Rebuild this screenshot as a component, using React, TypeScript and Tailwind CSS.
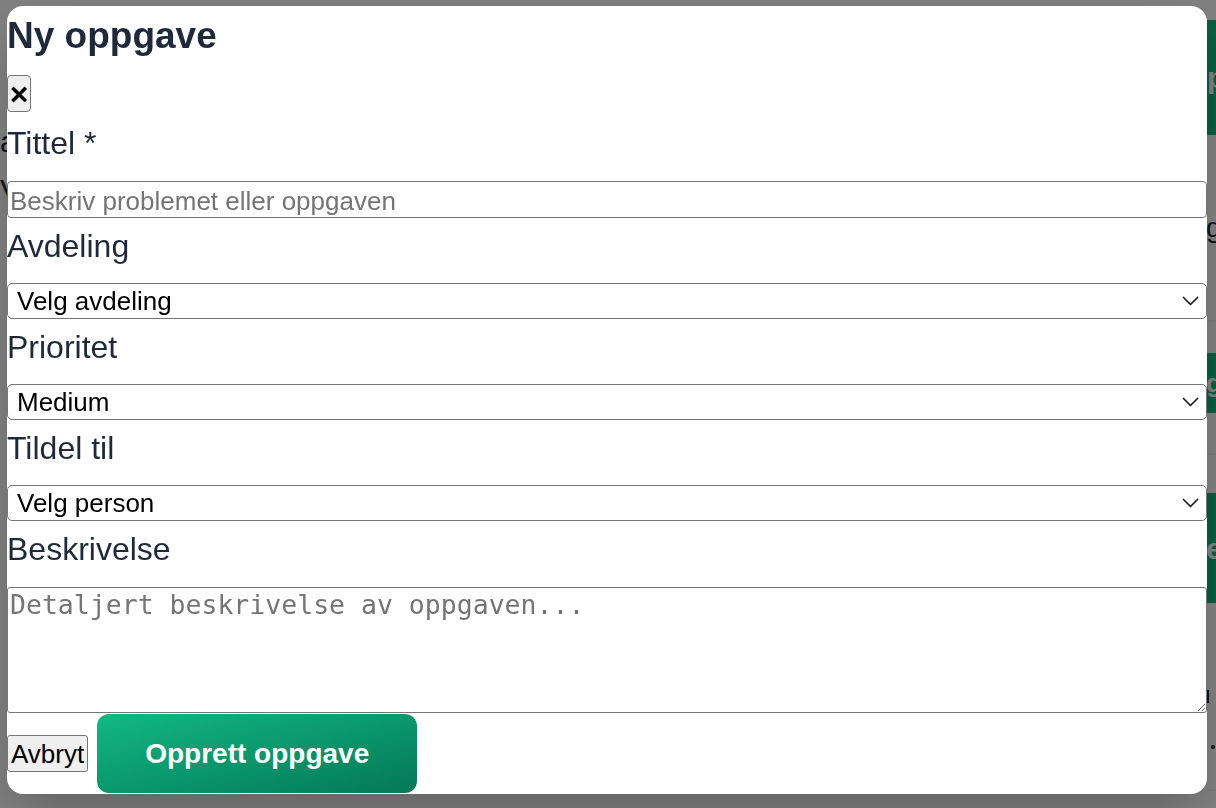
import React, { useState } from 'react';

const sans = "font-['Liberation_Sans',Arial,sans-serif]";
const labelCls = `block text-[32px] leading-[36px] text-[#1e293b] ${sans}`;

const Chevron = () => (
  <svg width="17" height="10" viewBox="0 0 17 10" fill="none" stroke="#1f1f1f" strokeWidth="1.7" strokeLinecap="round" strokeLinejoin="round">
    <path d="M1.5 1.5l7 7 7-7" />
  </svg>
);

interface SelectFieldProps {
  label: string;
  value: string;
  options: string[];
  onChange: (v: string) => void;
}

const SelectField: React.FC<SelectFieldProps> = ({ label, value, options, onChange }) => (
  <div>
    <label className={`${labelCls} mt-[10px] mb-[19px]`}>{label}</label>
    <div className="relative">
      <select
        value={value}
        onChange={e => onChange(e.target.value)}
        className={`block w-full h-[36px] appearance-none bg-white border border-[#767676] rounded-[5px] pl-[9px] pr-[40px] text-[26px] leading-[30px] text-black ${sans}`}
      >
        {options.map(o => (
          <option key={o} value={o}>{o}</option>
        ))}
      </select>
      <span className="pointer-events-none absolute right-[8px] top-1/2 -translate-y-1/2 flex">
        <Chevron />
      </span>
    </div>
  </div>
);

const App: React.FC = () => {
  const [avdeling, setAvdeling] = useState('Velg avdeling');
  const [prioritet, setPrioritet] = useState('Medium');
  const [person, setPerson] = useState('Velg person');

  return (
    <div className={`relative min-h-screen bg-white overflow-hidden ${sans}`}>
      {/* page behind the dialog */}
      <div className="flex">
        <div className="w-[1206px] shrink-0 pt-[122px] text-[#1e293b]">
          <p className="text-[30px] leading-[40px]">aktive oppgaver</p>
          <p className="text-[30px] leading-[40px] mt-[8px]">Vis alle</p>
        </div>
        <div className="w-[320px] shrink-0 pt-[20px] flex flex-col">
          <div className="h-[115px] bg-[#10b981] text-white text-[30px] font-bold flex items-center pl-[1px]">pågående</div>
          <p className="mt-[78px] text-[28px] text-[#1e293b] leading-[30px]">g</p>
          <div className="mt-[77px] h-[2px] bg-[#f3f4f6]" />
          <div className="mt-[31px] h-[60px] bg-[#10b981] text-white text-[26px] font-bold flex items-center">gjennomgang</div>
          <div className="mt-[40px] h-[2px] bg-[#f3f4f6]" />
          <div className="mt-[38px] h-[110px] bg-[#10b981] text-white text-[30px] font-bold flex items-center">e</div>
          <div className="mt-[87px] ml-[1px] w-[2px] h-[13px] bg-[#1e293b]" />
          <div className="mt-[42px] ml-[5px] w-[4px] h-[4px] rounded-full bg-[#1e293b]" />
          <div className="mt-[40px] h-[2px] bg-[#f3f4f6]" />
        </div>
      </div>

      {/* overlay + dialog */}
      <div className="fixed inset-0 bg-black/50">
        <div className="ml-[7px] mt-[6px] w-[1200px] bg-white rounded-2xl shadow-2xl overflow-hidden">
          <h2 className={`mt-[10px] mb-[19px] text-[37px] leading-[40px] font-bold text-[#1e293b] ${sans}`}>Ny oppgave</h2>

          <button className={`flex items-center justify-center w-[24px] h-[37px] bg-[#efefef] border border-[#767676] rounded-[4px] text-[32px] leading-[30px] font-bold text-black ${sans}`}>
            ×
          </button>

          <label className={`${labelCls} mt-[13px] mb-[20px]`}>Tittel *</label>
          <input
            type="text"
            placeholder="Beskriv problemet eller oppgaven"
            className={`block w-full h-[37px] border border-[#767676] rounded-[4px] px-[2px] pt-[3px] pb-0 text-[26px] leading-[30px] text-black placeholder:text-[#757575] ${sans}`}
          />

          <SelectField
            label="Avdeling"
            value={avdeling}
            onChange={setAvdeling}
            options={['Velg avdeling', 'Drift', 'Vedlikehold', 'Renhold']}
          />
          <SelectField
            label="Prioritet"
            value={prioritet}
            onChange={setPrioritet}
            options={['Lav', 'Medium', 'Høy', 'Kritisk']}
          />
          <SelectField
            label="Tildel til"
            value={person}
            onChange={setPerson}
            options={['Velg person', 'Kari Nordmann', 'Ola Nordmann']}
          />

          <label className={`${labelCls} mt-[10px] mb-[20px]`}>Beskrivelse</label>
          <textarea
            placeholder="Detaljert beskrivelse av oppgaven..."
            className="block w-full h-[126px] border border-[#767676] rounded-[3px] pt-[1px] px-[2px] pb-[2px] text-[26.5px] leading-[31px] text-black placeholder:text-[#757575] font-['DejaVu_Sans_Mono',monospace]"
          />

          <div className="flex items-center gap-[9px] h-[81px]">
            <button className={`h-[37px] px-[3px] bg-[#efefef] border border-[#767676] rounded-[3px] text-[26px] leading-[30px] text-black ${sans}`}>
              Avbryt
            </button>
            <button className={`w-[320px] h-[79px] rounded-xl bg-linear-to-br from-[#12b981] to-[#047857] text-white text-[28px] font-bold ${sans}`}>
              Opprett oppgave
            </button>
          </div>
        </div>
      </div>
    </div>
  );
};

export default App;
